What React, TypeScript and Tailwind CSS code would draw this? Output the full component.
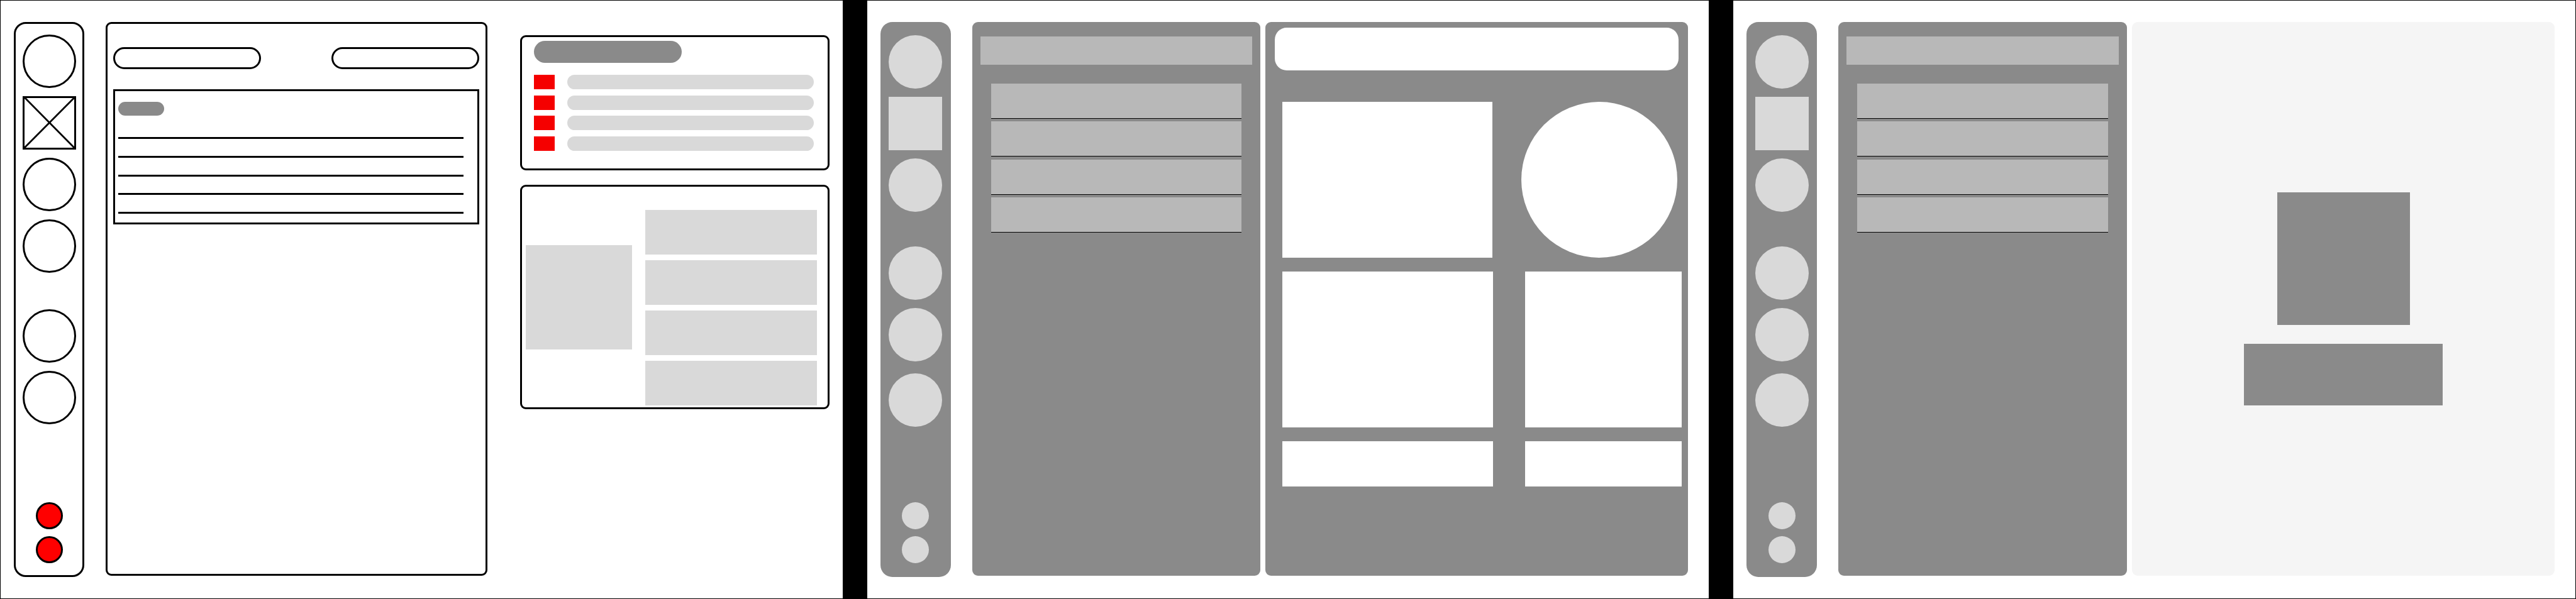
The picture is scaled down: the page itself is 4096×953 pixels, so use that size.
import type { ReactNode } from "react";
import clsx from "clsx";

const four = [1, 2, 3, 4];

function Screen({ label, children }: { label: string; children: ReactNode }) {
  return (
    <section aria-label={label} className="flex min-w-0 gap-[34px] border border-black bg-white py-[34px] pl-[21px]">
      {children}
    </section>
  );
}

function CrossedBox() {
  return (
    <button aria-label="Home" className="size-[85px] border-3 border-black">
      <svg viewBox="0 0 85 85" className="block size-full" stroke="#000" strokeWidth="3">
        <line x1="0.5" y1="-0.5" x2="85.5" y2="85.5" />
        <line x1="85" y1="-0.5" x2="-0.5" y2="85.5" />
      </svg>
    </button>
  );
}

function OutlineSidebar() {
  const round = "size-[85px] rounded-full border-3 border-black";
  const dot = "size-[43px] rounded-full border-3 border-black bg-[#ff0000]";
  return (
    <nav
      aria-label="Main"
      className="flex w-28 shrink-0 flex-col items-center rounded-[19px] border-3 border-black pt-[17px] pb-[19px]"
    >
      <div className="flex flex-col gap-[13px]">
        <button aria-label="Profile" className={round} />
        <CrossedBox />
        <button aria-label="Messages" className={round} />
        <button aria-label="Calendar" className={round} />
      </div>
      <div className="mt-[58px] flex flex-col gap-[13px]">
        <button aria-label="Reports" className={round} />
        <button aria-label="Settings" className={round} />
      </div>
      <div className="mt-auto flex flex-col gap-[11px]">
        <button aria-label="Help" className={dot} />
        <button aria-label="Sign out" className={dot} />
      </div>
    </nav>
  );
}

function SolidSidebar() {
  const round = "size-[85px] rounded-full bg-[#d9d9d9]";
  const dot = "size-[43px] rounded-full bg-[#d9d9d9]";
  return (
    <nav
      aria-label="Main"
      className="flex w-28 shrink-0 flex-col items-center rounded-[19px] bg-[#8a8a8a] pt-[21px] pb-[22px]"
    >
      <div className="flex flex-col gap-[13px]">
        <button aria-label="Profile" className={round} />
        <button aria-label="Home" className="size-[85px] bg-[#d9d9d9]" />
        <button aria-label="Messages" className={round} />
      </div>
      <div className="mt-[55px] flex flex-col gap-[13px]">
        <button aria-label="Calendar" className={round} />
        <button aria-label="Reports" className={round} />
      </div>
      <button aria-label="Settings" className={clsx(round, "mt-[19px]")} />
      <div className="mt-auto flex flex-col gap-[11px]">
        <button aria-label="Help" className={dot} />
        <button aria-label="Sign out" className={dot} />
      </div>
    </nav>
  );
}

function ListPanel() {
  return (
    <div className="rounded-[9px] bg-[#8a8a8a] px-[13px] pt-[23px]">
      <div className="h-[45px] bg-[#b8b8b8]" />
      <ul className="mx-[17px] mt-[30px] flex h-[237px] flex-col justify-between">
        {four.map((n) => (
          <li key={n} className="h-14 border-b border-black bg-[#b8b8b8]" />
        ))}
      </ul>
    </div>
  );
}

function Dashboard() {
  return (
    <Screen label="Dashboard">
      <OutlineSidebar />
      <div className="grid flex-1 grid-cols-[163fr_132fr] gap-[52px] pr-[21px]">
        <main className="mb-0.5 rounded-[9px] border-3 border-black pt-[37px] pr-2.5 pl-[9px]">
          <div className="flex justify-between">
            <button aria-label="Filter" className="h-[35px] w-[235px] rounded-full border-3 border-black" />
            <button aria-label="Create" className="h-[35px] w-[235px] rounded-full border-3 border-black" />
          </div>
          <div className="mt-8 border-3 border-black pt-[17px] pr-[22px] pb-3.5 pl-[5px]">
            <div className="h-[22px] w-[73px] rounded-full bg-[#8a8a8a]" />
            <ul className="mt-[34px] flex h-[122px] flex-col justify-between">
              {[...four, 5].map((n) => (
                <li key={n} className="h-[3px] bg-black" />
              ))}
            </ul>
          </div>
        </main>
        <aside className="flex flex-col gap-[23px] pt-[21px]">
          <div className="rounded-[9px] border-3 border-black pt-1.5 pr-[22px] pb-7 pl-[19px]">
            <div className="h-[35px] w-[235px] rounded-full bg-[#8a8a8a]" />
            <ul className="mt-[19px] flex h-[121px] flex-col justify-between">
              {four.map((n) => (
                <li key={n} className="flex h-[23px] gap-5">
                  <span className="w-[33px] bg-[#f50000]" />
                  <span className="flex-1 rounded-full bg-[#d9d9d9]" />
                </li>
              ))}
            </ul>
          </div>
          <div className="grid grid-cols-[182fr_293fr] items-start gap-[21px] rounded-[9px] border-3 border-black pt-[37px] pr-[17px] pb-[3px] pl-1.5">
            <div className="mt-14 h-[166px] bg-[#d9d9d9]" />
            <ul className="flex flex-col gap-[9px]">
              {four.map((n) => (
                <li key={n} className="h-[71px] bg-[#d9d9d9]" />
              ))}
            </ul>
          </div>
        </aside>
      </div>
    </Screen>
  );
}

function Details() {
  return (
    <Screen label="Details">
      <SolidSidebar />
      <div className="mb-0.5 grid flex-1 grid-cols-[493fr_722fr] gap-2 pr-[33px]">
        <ListPanel />
        <main className="rounded-[9px] bg-[#8a8a8a] pt-[9px]">
          <div className="px-[15px]">
            <input aria-label="Search" type="text" className="block h-[68px] w-full rounded-[19px] bg-white" />
          </div>
          <div className="mt-[50px] flex flex-col gap-[22px] pr-2.5 pl-[27px]">
            <div className="flex gap-[46px] pr-[7px]">
              <div className="flex-1 bg-white" />
              <div className="size-[248px] rounded-full bg-white" />
            </div>
            <div className="grid grid-cols-[359fr_268fr] gap-x-[51px] gap-y-[22px]">
              <div className="h-[248px] bg-white" />
              <div className="h-[248px] bg-white" />
              <div className="h-[72px] bg-white" />
              <div className="h-[72px] bg-white" />
            </div>
          </div>
        </main>
      </div>
    </Screen>
  );
}

function EmptyState() {
  return (
    <Screen label="Nothing selected">
      <SolidSidebar />
      <div className="mb-0.5 grid flex-1 grid-cols-[493fr_722fr] gap-2 pr-[33px]">
        <ListPanel />
        <main className="flex flex-col items-center gap-[30px] rounded-[9px] bg-[#f5f5f5] pt-[271px]">
          <div className="size-[211px] bg-[#8a8a8a]" />
          <div className="h-[98px] w-[316px] bg-[#8a8a8a]" />
        </main>
      </div>
    </Screen>
  );
}

export default function App() {
  return (
    <div className="grid min-h-screen grid-cols-3 gap-[37px] bg-black">
      <Dashboard />
      <Details />
      <EmptyState />
    </div>
  );
}
